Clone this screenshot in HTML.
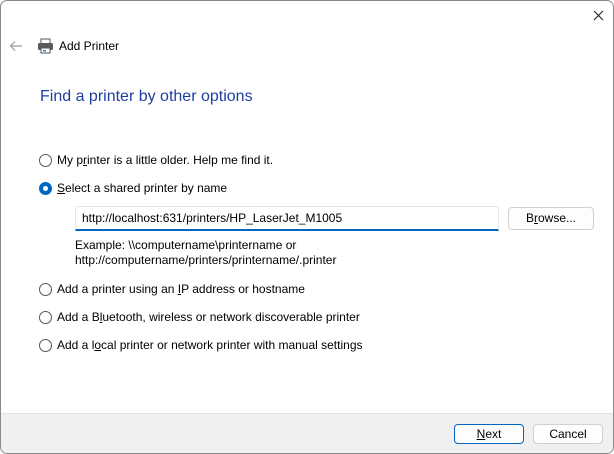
<!DOCTYPE html>
<html><head><style>
*{margin:0;padding:0;box-sizing:border-box}
body{width:614px;height:454px;background:#fff;font-family:"Liberation Sans",sans-serif;font-size:12px;color:#000;position:relative;overflow:hidden}
.win{position:absolute;left:0;top:0;width:614px;height:454px;border:1px solid #8a8a8a;border-radius:7px;overflow:hidden;background:#fff}
.a{position:absolute;white-space:nowrap}
.radio{position:absolute;width:13px;height:13px;border:1px solid #555;border-radius:50%;background:#fff}
.radio.on{background:#0067c0;border-color:#0067c0}
.radio.on::after{content:"";position:absolute;left:3px;top:3px;width:5px;height:5px;border-radius:50%;background:#fff}
.btn{position:absolute;border:1px solid #d0d0d0;border-radius:4px;background:#fdfdfd;text-align:center;line-height:18px}
u{text-decoration:underline}
</style></head><body><div class="win">
<svg class="a" style="left:592px;top:9px" width="11" height="11"><path d="M1 1L10 10M10 1L1 10" stroke="#222" stroke-width="1.1"/></svg>
<svg class="a" style="left:8px;top:39px" width="14" height="12"><path d="M13 6H2M6 1.5L1.5 6 6 10.5" stroke="#999" stroke-width="1.2" fill="none"/></svg>
<svg class="a" style="left:36px;top:37px" width="17" height="16"><rect x="4" y="1" width="9" height="5" fill="#fff" stroke="#555"/><rect x="1" y="5" width="15" height="7" rx="1.5" fill="#5a5a5a"/><rect x="4" y="10" width="9" height="5" fill="#fff" stroke="#555"/><rect x="6" y="12" width="3" height="1.5" fill="#2d7fd4"/></svg>
<div class="a" style="left:58px;top:38px;font-size:12px">Add Printer</div>
<div class="a" style="left:39px;top:87px;font-size:16px;color:#1f3fa0">Find a printer by other options</div>

<div class="radio" style="left:38px;top:153px"></div>
<div class="a" style="left:56px;top:152px">My p<u>r</u>inter is a little older. Help me find it.</div>
<div class="radio on" style="left:38px;top:181px"></div>
<div class="a" style="left:56px;top:180px"><u>S</u>elect a shared printer by name</div>
<div class="a" style="left:74px;top:205px;width:424px;height:25px;border:1px solid #e5e5e5;border-bottom:2px solid #0067c0;border-radius:3px 3px 0 0;padding:4px 0 0 6px">http://localhost:631/printers/HP_LaserJet_M1005</div>
<div class="btn" style="left:507px;top:206px;width:86px;height:23px;line-height:21px">B<u>r</u>owse...</div>
<div class="a" style="left:74px;top:237px;line-height:15px">Example: \\computername\printername or<br>http://computername/printers/printername/.printer</div>

<div class="radio" style="left:38px;top:282px"></div>
<div class="a" style="left:56px;top:281px">Add a printer using an <u>I</u>P address or hostname</div>
<div class="radio" style="left:38px;top:310px"></div>
<div class="a" style="left:56px;top:309px">Add a B<u>l</u>uetooth, wireless or network discoverable printer</div>
<div class="radio" style="left:38px;top:338px"></div>
<div class="a" style="left:56px;top:337px">Add a l<u>o</u>cal printer or network printer with manual settings</div>

<div class="a" style="left:0;top:412px;width:614px;height:42px;background:#f0f0f0;border-top:1px solid #e3e3e3"></div>
<div class="btn" style="left:453px;top:423px;width:70px;height:20px;border:1px solid #0067c0;background:#fdfdfd"><u>N</u>ext</div>
<div class="btn" style="left:532px;top:423px;width:70px;height:20px">Cancel</div>
</div></body></html>
